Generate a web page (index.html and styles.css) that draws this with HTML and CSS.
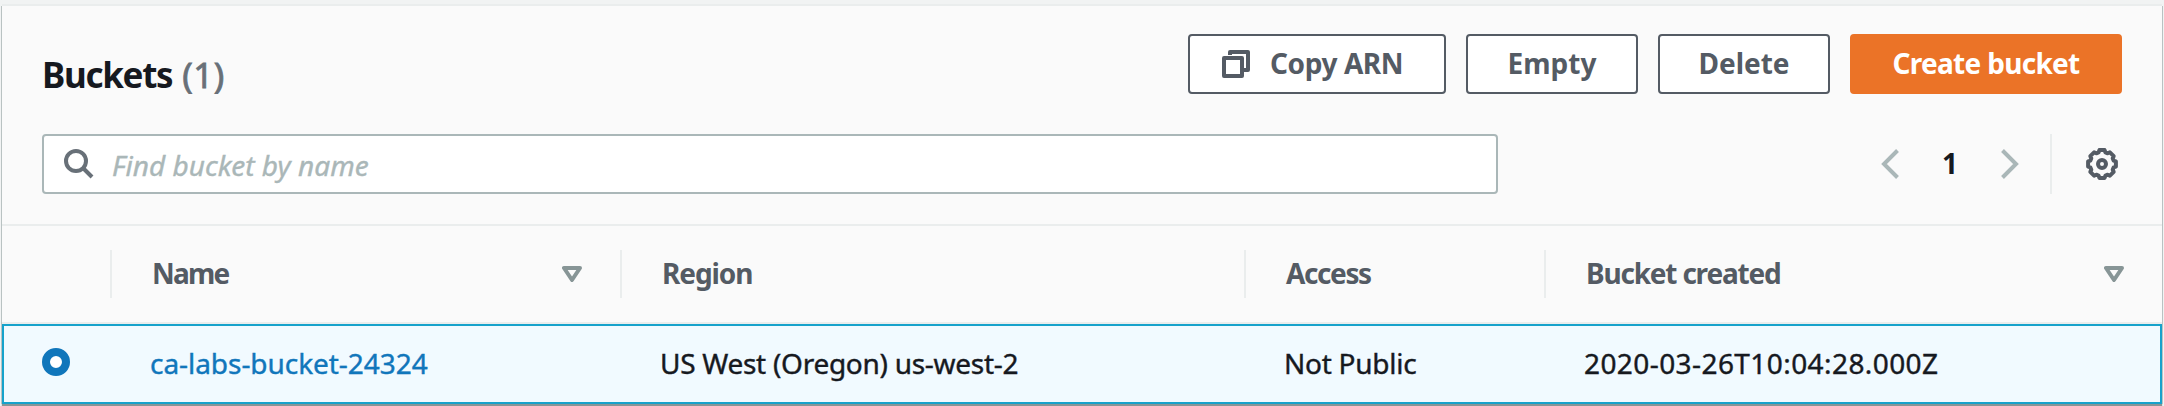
FILE: index.html
```html
<!DOCTYPE html>
<html lang="en">
<head>
<meta charset="utf-8">
<title>Buckets</title>
<link rel="stylesheet" href="styles.css">
</head>
<body>
<main class="panel">
  <header class="panel-header">
    <h1 class="title"><span class="title-text">Buckets</span> <span class="count">(1)</span></h1>
    <div class="actions">
      <button class="btn btn-copy"><svg class="icon-copy" viewBox="0 0 28 28"><path d="M8 5V2h18v18h-4M2 8h18v18H2z"/></svg><span class="t-copy">Copy ARN</span></button>
      <button class="btn btn-short"><span class="t-empty">Empty</span></button>
      <button class="btn btn-short"><span class="t-delete">Delete</span></button>
      <button class="btn btn-primary"><span class="t-create">Create bucket</span></button>
    </div>
  </header>
  <div class="tools">
    <div class="search">
      <svg class="icon-search" viewBox="0 0 30 30"><circle cx="12" cy="12" r="10"/><path d="M19 19l9 9"/></svg>
      <span class="placeholder">Find bucket by name</span>
    </div>
    <nav class="pagination">
      <svg class="chevron" viewBox="0 0 18 30"><path d="M16.500 1.500L3 15l13.500 13.500"/></svg>
      <span class="page">1</span>
      <svg class="chevron" viewBox="0 0 18 30"><path d="M1.500 1.500L15 15 1.500 28.500"/></svg>
      <span class="divider"></span>
      <svg class="icon-gear" viewBox="-16 -16 32 32"><path d="M-2.600-13.900H2.600L3.400-11.600 5.700-10.700 7.900-11.700 11.700-7.900 10.700-5.700 11.600-3.400 13.900-2.600V2.600L11.600 3.400 10.700 5.700 11.700 7.900 7.900 11.700 5.700 10.700 3.400 11.600 2.600 13.900H-2.600L-3.400 11.600-5.700 10.700-7.900 11.700-11.700 7.900-10.700 5.700-11.600 3.400-13.900 2.600V-2.600L-11.600-3.400-10.700-5.700-11.700-7.900-7.900-11.700-5.700-10.700-3.400-11.600z"/><circle r="4"/></svg>
    </nav>
  </div>
  <div class="row head">
    <div class="cell"></div>
    <div class="cell"><span class="t-name">Name</span><svg class="sort" viewBox="0 0 20 16"><path d="M2 2h16l-8 12z"/></svg></div>
    <div class="cell"><span class="t-region">Region</span></div>
    <div class="cell"><span class="t-access">Access</span></div>
    <div class="cell"><span class="t-created">Bucket created</span><svg class="sort" viewBox="0 0 20 16"><path d="M2 2h16l-8 12z"/></svg></div>
  </div>
  <div class="row item">
    <div class="cell"><span class="radio"></span></div>
    <div class="cell"><a class="link">ca-labs-bucket-24324</a></div>
    <div class="cell"><span class="v-region">US West (Oregon) us-west-2</span></div>
    <div class="cell"><span class="v-access">Not Public</span></div>
    <div class="cell"><span class="v-created">2020-03-26T10:04:28.000Z</span></div>
  </div>
</main>
</body>
</html>
```
FILE: styles.css
```css
* { box-sizing: border-box; }
body {
  margin: 0;
  height: 406px;
  overflow: hidden;
  background: #f1f3f3;
  font: 28px/40px "Noto Sans", sans-serif;
  color: #16191f;
}
svg { display: block; flex: none; fill: none; }
span, a { white-space: nowrap; }
.panel {
  margin: 6px 2px 0;
  height: 398px;
  background: #fafafa;
  box-shadow: 1px 0 0 #b9c2c2, -1px 0 0 #b9c2c2, 0 -2px 0 #eaeded, 0 2px 1px #879596;
}
.panel-header {
  display: flex;
  justify-content: space-between;
  padding: 28px 40px 0;
  height: 128px;
}
.title { margin: 16px 0 0; font-size: 35px; line-height: 50px; letter-spacing: -1.3px; }
.count { margin-left: 2px; font-weight: 400; color: #687078; letter-spacing: 0.5px; -webkit-text-stroke: 0.8px; }
.actions { display: flex; gap: 20px; }
.btn {
  display: flex;
  align-items: center;
  justify-content: center;
  height: 60px;
  padding: 0;
  border: 2px solid #545b64;
  border-radius: 4px;
  background: #fff;
  color: #545b64;
  font: 700 28px/40px "Noto Sans", sans-serif;
}
.btn span { margin-bottom: 2px; }
.btn-copy { width: 258px; justify-content: flex-start; padding-left: 32px; gap: 20px; }
.btn-short { width: 172px; }
.btn-primary { width: 272px; background: #eb7327; border-color: #eb7327; color: #fff; }
.t-copy { letter-spacing: -0.4px; }
.t-create { letter-spacing: -0.7px; }
.icon-copy { width: 28px; height: 28px; stroke: #545b64; stroke-width: 4; stroke-linejoin: round; }
.tools { display: flex; justify-content: space-between; height: 60px; padding: 0 40px; }
.search {
  display: flex;
  align-items: center;
  gap: 18px;
  width: 1456px;
  padding-left: 20px;
  border: 2px solid #aab7b8;
  border-radius: 4px;
  background: #fff;
}
.icon-search { width: 30px; height: 30px; stroke: #687078; stroke-width: 4; }
.placeholder { margin-top: 2px; color: #aab7b8; font-style: italic; letter-spacing: 0.05px; -webkit-text-stroke: 0.4px; }
.pagination { display: flex; align-items: center; padding-right: 4px; }
.chevron { width: 18px; height: 30px; stroke: #aab7b8; stroke-width: 4; }
.page { width: 102px; margin-bottom: 2px; text-align: center; font-weight: 700; }
.divider { width: 2px; height: 60px; margin: 0 34px 0 31px; background: #eaeded; }
.icon-gear { width: 32px; height: 32px; stroke: #545b64; stroke-width: 4; stroke-linejoin: round; }
.row { display: grid; grid-template-columns: 108px 510px 624px 300px 1fr; }
.head {
  height: 100px;
  margin-top: 30px;
  padding: 24px 0;
  border-top: 2px solid #eaeded;
  border-bottom: 2px solid #eaeded;
  color: #545b64;
  font-weight: 700;
}
.head .cell { display: flex; align-items: center; justify-content: space-between; padding: 0 38px 0 40px; }
.head .cell + .cell { border-left: 2px solid #eaeded; }
.head span { margin-bottom: 2px; }
.t-name { letter-spacing: -1.8px; }
.t-region { letter-spacing: -1.1px; }
.t-access { letter-spacing: -1.4px; }
.t-created { letter-spacing: -1.2px; }
.sort { width: 20px; height: 16px; stroke: #879596; stroke-width: 4; stroke-linejoin: round; }
.item { height: 80px; border: 2px solid #16a2cb; background: #f1faff; }
.item .cell { display: flex; align-items: center; padding: 0 0 2px 38px; -webkit-text-stroke: 0.4px; }
.radio { width: 28px; height: 28px; border: 8px solid #1076bb; border-radius: 50%; background: #fff; margin-bottom: 2px; }
.link { color: #1076bb; letter-spacing: -0.05px; }
.v-region { letter-spacing: -0.28px; }
.v-access { letter-spacing: -0.25px; }
.v-created { letter-spacing: 0.42px; }
```
